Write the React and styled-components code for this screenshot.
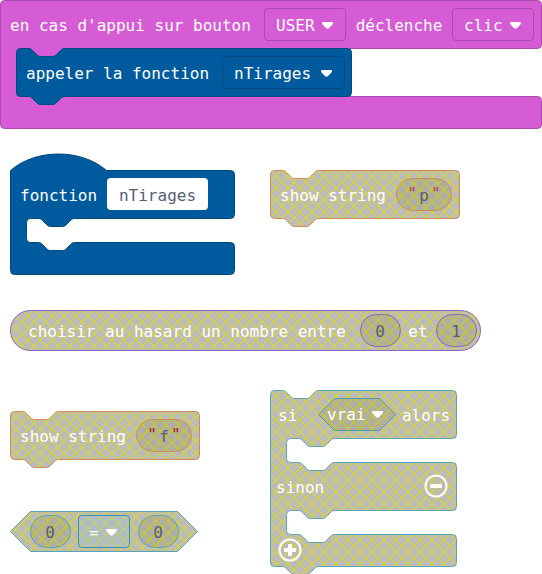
import React, { useId } from "react";
import styled, { createGlobalStyle, css } from "styled-components";

const GlobalStyle = createGlobalStyle`
  *, *::before, *::after { box-sizing: border-box; }
  body { margin: 0; background: #ffffff; }
`;

/* ---------- block outlines ---------- */

const NOTCH = "c2,0 3,1 4,2 l4,4 c1,1 2,2 4,2 h12 c2,0 3,-1 4,-2 l4,-4 c1,-1 2,-2 4,-2";
const NOTCH_BACK =
  "c-2,0 -3,1 -4,2 l-4,4 c-1,1 -2,2 -4,2 h-12 c-2,0 -3,-1 -4,-2 l-4,-4 c-1,-1 -2,-2 -4,-2";

function blockPath({ w, h, cap = "notch", tail = true, cavities = [] }) {
  const starts = {
    notch: `M0,4 a4,4 0 0,1 4,-4 h8 ${NOTCH}`,
    plain: "M0,4 a4,4 0 0,1 4,-4",
    hat: "M0,0 c25,-22 71,-22 96,0",
  };
  const arm = `H${w - 4} a4,4 0 0,1 4,4`;
  const mouths = cavities
    .map(
      ([top, bottom]) =>
        `V${top - 4} a4,4 0 0,1 -4,4 H64 ${NOTCH_BACK} h-8 a4,4 0 0,0 -4,4 ` +
        `V${bottom - 4} a4,4 0 0,0 4,4 h8 ${NOTCH} ${arm}`
    )
    .join(" ");
  const foot = tail ? `H48 ${NOTCH_BACK} H4` : "H4";
  return `${starts[cap]} ${arm} ${mouths} V${h - 4} a4,4 0 0,1 -4,4 ${foot} a4,4 0 0,1 -4,-4 Z`;
}

const pillPath = (w, h) =>
  `M${h / 2},0 H${w - h / 2} a${h / 2},${h / 2} 0 0,1 0,${h} H${h / 2} a${h / 2},${h / 2} 0 0,1 0,${-h} Z`;

const hexPath = (w, h) =>
  `M${h / 2},0 H${w - h / 2} L${w},${h / 2} L${w - h / 2},${h} H${h / 2} L0,${h / 2} Z`;

const Drawing = styled.svg`
  position: absolute;
  left: 0;
  top: 0;
  overflow: visible;
  pointer-events: none;
`;

function Outline({ d, w, h, fill, stroke }) {
  const id = useId();
  return (
    <Drawing width={w} height={h} aria-hidden="true">
      {!fill && (
        <pattern
          id={id}
          patternUnits="userSpaceOnUse"
          width="12"
          height="12"
          patternTransform="translate(-0.5 -0.5)"
        >
          <rect width="12" height="12" fill="#aaaaaa" />
          <path d="M-1,-1 L13,13 M13,-1 L-1,13" stroke="#cccc00" strokeWidth="1.2" />
        </pattern>
      )}
      <path
        d={d}
        transform="translate(0.5 0.5)"
        fill={fill || `url(#${id})`}
        fillOpacity={fill ? 1 : 0.8}
        stroke={stroke}
      />
    </Drawing>
  );
}

/* ---------- layout ---------- */

const Workspace = styled.main`
  position: relative;
  min-height: 574px;
  overflow: hidden;
  color: #ffffff;
  font: 16px/32px "DejaVu Sans Mono", monospace;
`;

const Block = styled.section`
  position: relative;
  width: ${(p) => p.$w}px;
  min-height: ${(p) => p.$h}px;
  ${(p) =>
    p.$at &&
    css`
      position: absolute;
      left: ${p.$at[0]}px;
      top: ${p.$at[1]}px;
    `}
`;

const Row = styled.div`
  position: relative;
  display: grid;
  grid-template-columns: ${(p) => p.$cols};
  column-gap: 8px;
  align-items: start;
  height: ${(p) => p.$h || 48}px;
  padding: ${(p) => p.$top ?? 8}px 0 0 ${(p) => p.$left ?? 10}px;
`;

const Statement = styled.div`
  min-height: ${(p) => p.$h || 24}px;
  padding-left: 16px;
`;

const Label = styled.span`
  height: 34px;
  padding-top: 2px;
  white-space: pre;
  justify-self: ${(p) => (p.$center ? "center" : "start")};
`;

/* ---------- fields ---------- */

const FieldBox = styled.label`
  position: relative;
  display: flex;
  align-items: center;
  justify-content: center;
  width: 100%;
  height: ${(p) => (p.$framed ? 33 : 32)}px;
  border: ${(p) => (p.$framed ? `1px solid ${p.$line}` : "0")};
  border-radius: 4px;
  background: ${(p) => p.$fill || "transparent"};
`;

const Select = styled.select`
  position: relative;
  appearance: none;
  width: 100%;
  height: 100%;
  margin: 0;
  padding: 1px 0 0 ${(p) => p.$pad || 11}px;
  border: 0;
  outline: 0;
  background: transparent;
  color: inherit;
  font: inherit;
  option { color: #333333; }
`;

const Caret = styled.svg`
  position: absolute;
  right: 12px;
  top: calc(50% - 3px);
  pointer-events: none;
`;

const TextInput = styled.input`
  position: relative;
  width: ${(p) => p.$w || "100%"};
  height: 32px;
  margin: 0;
  padding: 3px 0 0;
  border: 0;
  outline: 0;
  border-radius: 4px;
  background: ${(p) => p.$fill || "transparent"};
  color: #575e75;
  font: inherit;
  text-align: center;
`;

const Quote = styled.span`
  position: relative;
  color: #b01c1c;
  opacity: ${(p) => (p.$soft ? 0.75 : 1)};
`;

const RoundButton = styled.button`
  display: block;
  width: 24px;
  height: 24px;
  padding: 0;
  border: 0;
  background: transparent;
  justify-self: ${(p) => (p.$end ? "end" : "start")};
  svg { display: block; }
`;

function Dropdown({ name, value, line, fill, pad, framed = true, children }) {
  return (
    <FieldBox $framed={framed} $line={line} $fill={fill}>
      {children}
      <Select aria-label={name} defaultValue={value} $pad={pad}>
        <option>{value}</option>
      </Select>
      <Caret width="11" height="7" viewBox="0 0 11 7" aria-hidden="true">
        <path
          d="M1,0 H10 Q11,0 11,1 Q11,2 10,3 L7,6 Q5.5,7.6 4,6 L1,3 Q0,2 0,1 Q0,0 1,0 Z"
          fill="#ffffff"
        />
      </Caret>
    </FieldBox>
  );
}

function NumberField({ name, value, stroke }) {
  return (
    <FieldBox>
      <Outline d={pillPath(40, 32)} w={41} h={33} stroke={stroke} />
      <TextInput aria-label={name} inputMode="numeric" defaultValue={value} />
    </FieldBox>
  );
}

function StringField({ value, stroke, soft }) {
  return (
    <FieldBox>
      <Outline d={pillPath(55, 32)} w={56} h={33} stroke={stroke} />
      <Quote $soft={soft}>"</Quote>
      <TextInput aria-label="string" $w="14px" defaultValue={value} />
      <Quote $soft={soft}>"</Quote>
    </FieldBox>
  );
}

function SignButton({ name, plus, end }) {
  return (
    <RoundButton type="button" aria-label={name} $end={end}>
      <svg width="24" height="24" viewBox="0 0 24 24" aria-hidden="true">
        <circle cx="12" cy="12" r="10.5" fill="none" stroke="#ffffff" strokeWidth="2" />
        <rect x="6" y="10" width="12" height="4" rx="1" fill="#ffffff" />
        {plus && <rect x="10" y="6" width="4" height="12" rx="1" fill="#ffffff" />}
      </svg>
    </RoundButton>
  );
}

/* ---------- blocks ---------- */

const PINK = { fill: "#d65cd6", stroke: "#ab4aab" };
const BLUE = { fill: "#005a9e", stroke: "#00487e" };
const ORANGE = "#d08c50";
const PURPLE = "#8a63bf";
const TEAL = "#5aa2b8";

function CallBlock() {
  return (
    <Block $w={336} $h={48}>
      <Outline d={blockPath({ w: 335, h: 48 })} w={336} h={57} {...BLUE} />
      <Row $cols="188px 123px">
        <Label>appeler la fonction</Label>
        <Dropdown name="fonction" value="nTirages" line={BLUE.stroke} />
      </Row>
    </Block>
  );
}

function EventBlock() {
  const d = blockPath({ w: 541, h: 128, cap: "plain", tail: false, cavities: [[48, 96]] });
  return (
    <Block $at={[0, 0]} $w={542} $h={129}>
      <Outline d={d} w={542} h={129} {...PINK} />
      <Row $cols="246px 82px 90px 82px">
        <Label>en cas d'appui sur bouton</Label>
        <Dropdown name="bouton" value="USER" line={PINK.stroke} />
        <Label $center>déclenche</Label>
        <Dropdown name="déclenche" value="clic" line={PINK.stroke} />
      </Row>
      <Statement $h={48}>
        <CallBlock />
      </Statement>
    </Block>
  );
}

function FunctionBlock() {
  const d = blockPath({ w: 224, h: 104, cap: "hat", tail: false, cavities: [[48, 72]] });
  return (
    <Block $at={[10, 170]} $w={225} $h={105}>
      <Outline d={d} w={225} h={105} {...BLUE} />
      <Row $cols="79px 101px">
        <Label>fonction</Label>
        <TextInput aria-label="fonction" defaultValue="nTirages" $fill="#ffffff" />
      </Row>
    </Block>
  );
}

function ShowStringBlock({ at, value, soft }) {
  return (
    <Block $at={at} $w={189} $h={49}>
      <Outline d={blockPath({ w: 189, h: 48 })} w={190} h={57} stroke={ORANGE} />
      <Row $cols="108px 56px">
        <Label>show string</Label>
        <StringField value={value} stroke={ORANGE} soft={soft} />
      </Row>
    </Block>
  );
}

function RandomBlock() {
  return (
    <Block $at={[10, 310]} $w={471} $h={41}>
      <Outline d={pillPath(470, 40)} w={471} h={41} stroke={PURPLE} />
      <Row $h={40} $top={4} $left={18} $cols="324px 40px 20px 40px">
        <Label>choisir au hasard un nombre entre</Label>
        <NumberField name="minimum" value="0" stroke={PURPLE} />
        <Label $center>et</Label>
        <NumberField name="maximum" value="1" stroke={PURPLE} />
      </Row>
    </Block>
  );
}

function CompareBlock() {
  return (
    <Block $at={[10, 511]} $w={188} $h={41}>
      <Outline d={hexPath(187, 40)} w={188} h={41} stroke={TEAL} />
      <Row $h={40} $top={4} $left={20} $cols="40px 52px 40px">
        <NumberField name="gauche" value="0" stroke={TEAL} />
        <Dropdown name="opérateur" value="=" line="#3f8fb0" fill="rgba(150, 200, 225, 0.3)" pad={10} />
        <NumberField name="droite" value="0" stroke={TEAL} />
      </Row>
    </Block>
  );
}

function IfBlock() {
  const d = blockPath({ w: 186, h: 176, cavities: [[48, 72], [120, 144]] });
  return (
    <Block $at={[270, 390]} $w={187} $h={177}>
      <Outline d={d} w={187} h={185} stroke={TEAL} />
      <Row $left={8} $cols="32px 77px 46px">
        <Label>si</Label>
        <Dropdown name="condition" value="vrai" framed={false} pad={9}>
          <Outline d={hexPath(77, 32)} w={78} h={33} stroke="#4f9aa8" />
        </Dropdown>
        <Label $center>alors</Label>
      </Row>
      <Statement />
      <Row $left={6} $cols="60px 104px">
        <Label>sinon</Label>
        <ElseRemove />
      </Row>
      <Statement />
      <Row $h={32} $top={4} $left={8} $cols="24px">
        <SignButton name="ajouter sinon si" plus />
      </Row>
    </Block>
  );
}

const ButtonSlot = styled.div`
  display: grid;
  height: 32px;
  align-items: center;
`;

function ElseRemove() {
  return (
    <ButtonSlot>
      <SignButton name="supprimer sinon" end />
    </ButtonSlot>
  );
}

export default function App() {
  return (
    <>
      <GlobalStyle />
      <Workspace>
        <EventBlock />
        <FunctionBlock />
        <ShowStringBlock at={[270, 170]} value="p" soft />
        <RandomBlock />
        <ShowStringBlock at={[10, 411]} value="f" />
        <IfBlock />
        <CompareBlock />
      </Workspace>
    </>
  );
}
